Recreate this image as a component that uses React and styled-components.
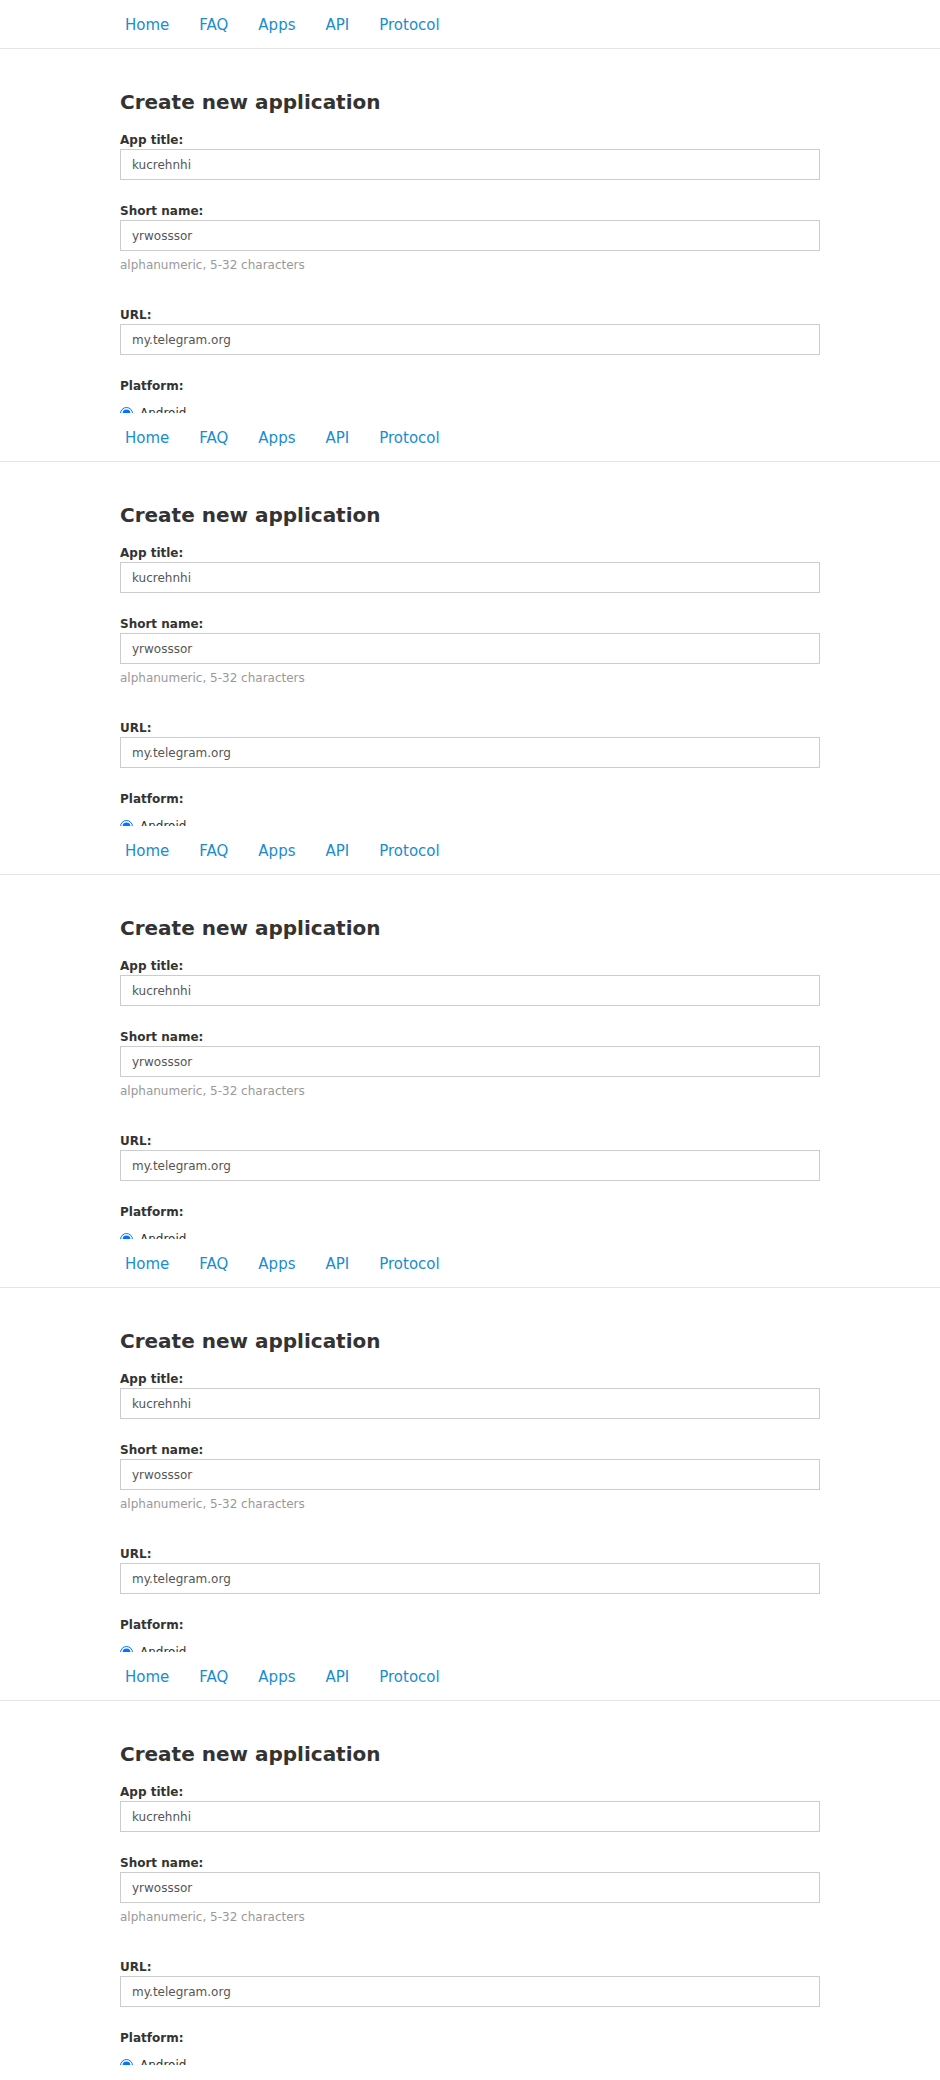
import React from "react";
import styled, { createGlobalStyle } from "styled-components";

const Global = createGlobalStyle`
  html, body { margin: 0; padding: 0; background: #fff; }
  body { font-family: "DejaVu Sans", "Liberation Sans", sans-serif; color: #333; }
  * { box-sizing: border-box; }
`;

const Panel = styled.section`
  height: 413px;
  overflow: hidden;
  background: #fff;
`;

const Nav = styled.nav`
  height: 49px;
  border-bottom: 1px solid #e5e5e5;
  padding: 15px 0 0 125px;
  display: flex;
  gap: 30px;
`;

const NavLink = styled.a`
  font-size: 15px;
  line-height: 20px;
  color: #1a8ccf;
  text-decoration: none;
`;

const Content = styled.div`
  width: 700px;
  margin-left: 120px;
  padding-top: 41px;
`;

const Title = styled.h1`
  margin: 0 0 18px;
  font-size: 20px;
  line-height: 24px;
  font-weight: bold;
  color: #333;
`;

const Field = styled.div`
  margin-bottom: ${(p) => p.$mb || 23}px;
`;

const Label = styled.label`
  display: block;
  font-size: 12px;
  line-height: 16px;
  font-weight: bold;
  color: #333;
  margin-bottom: 1px;
`;

const Input = styled.input`
  display: block;
  width: 700px;
  height: 31px;
  border: 1px solid #ccc;
  padding: 0 11px;
  font-family: "DejaVu Sans", sans-serif;
  font-size: 12px;
  color: #555;
  background: #fff;
  outline: none;
`;

const Help = styled.div`
  margin-top: 6px;
  font-size: 12px;
  line-height: 16px;
  color: #999;
`;

const RadioRow = styled.label`
  display: flex;
  align-items: center;
  gap: 7px;
  font-size: 12px;
  line-height: 16px;
  color: #333;
  margin-top: 11px;
`;

const Radio = styled.input`
  margin: 0;
  width: 13px;
  height: 13px;
`;

function Block({ idx }) {
  return (
    <Panel>
      <Nav>
        <NavLink href="#">Home</NavLink>
        <NavLink href="#">FAQ</NavLink>
        <NavLink href="#">Apps</NavLink>
        <NavLink href="#">API</NavLink>
        <NavLink href="#">Protocol</NavLink>
      </Nav>
      <Content>
        <Title>Create new application</Title>
        <Field>
          <Label>App title:</Label>
          <Input defaultValue="kucrehnhi" />
        </Field>
        <Field $mb={34}>
          <Label>Short name:</Label>
          <Input defaultValue="yrwosssor" />
          <Help>alphanumeric, 5-32 characters</Help>
        </Field>
        <Field>
          <Label>URL:</Label>
          <Input defaultValue="my.telegram.org" />
        </Field>
        <Field>
          <Label>Platform:</Label>
          <RadioRow>
            <Radio type="radio" name={`platform-${idx}`} defaultChecked />
            Android
          </RadioRow>
        </Field>
      </Content>
    </Panel>
  );
}

export default function App() {
  return (
    <>
      <Global />
      {[0, 1, 2, 3, 4].map((i) => (
        <Block key={i} idx={i} />
      ))}
    </>
  );
}
